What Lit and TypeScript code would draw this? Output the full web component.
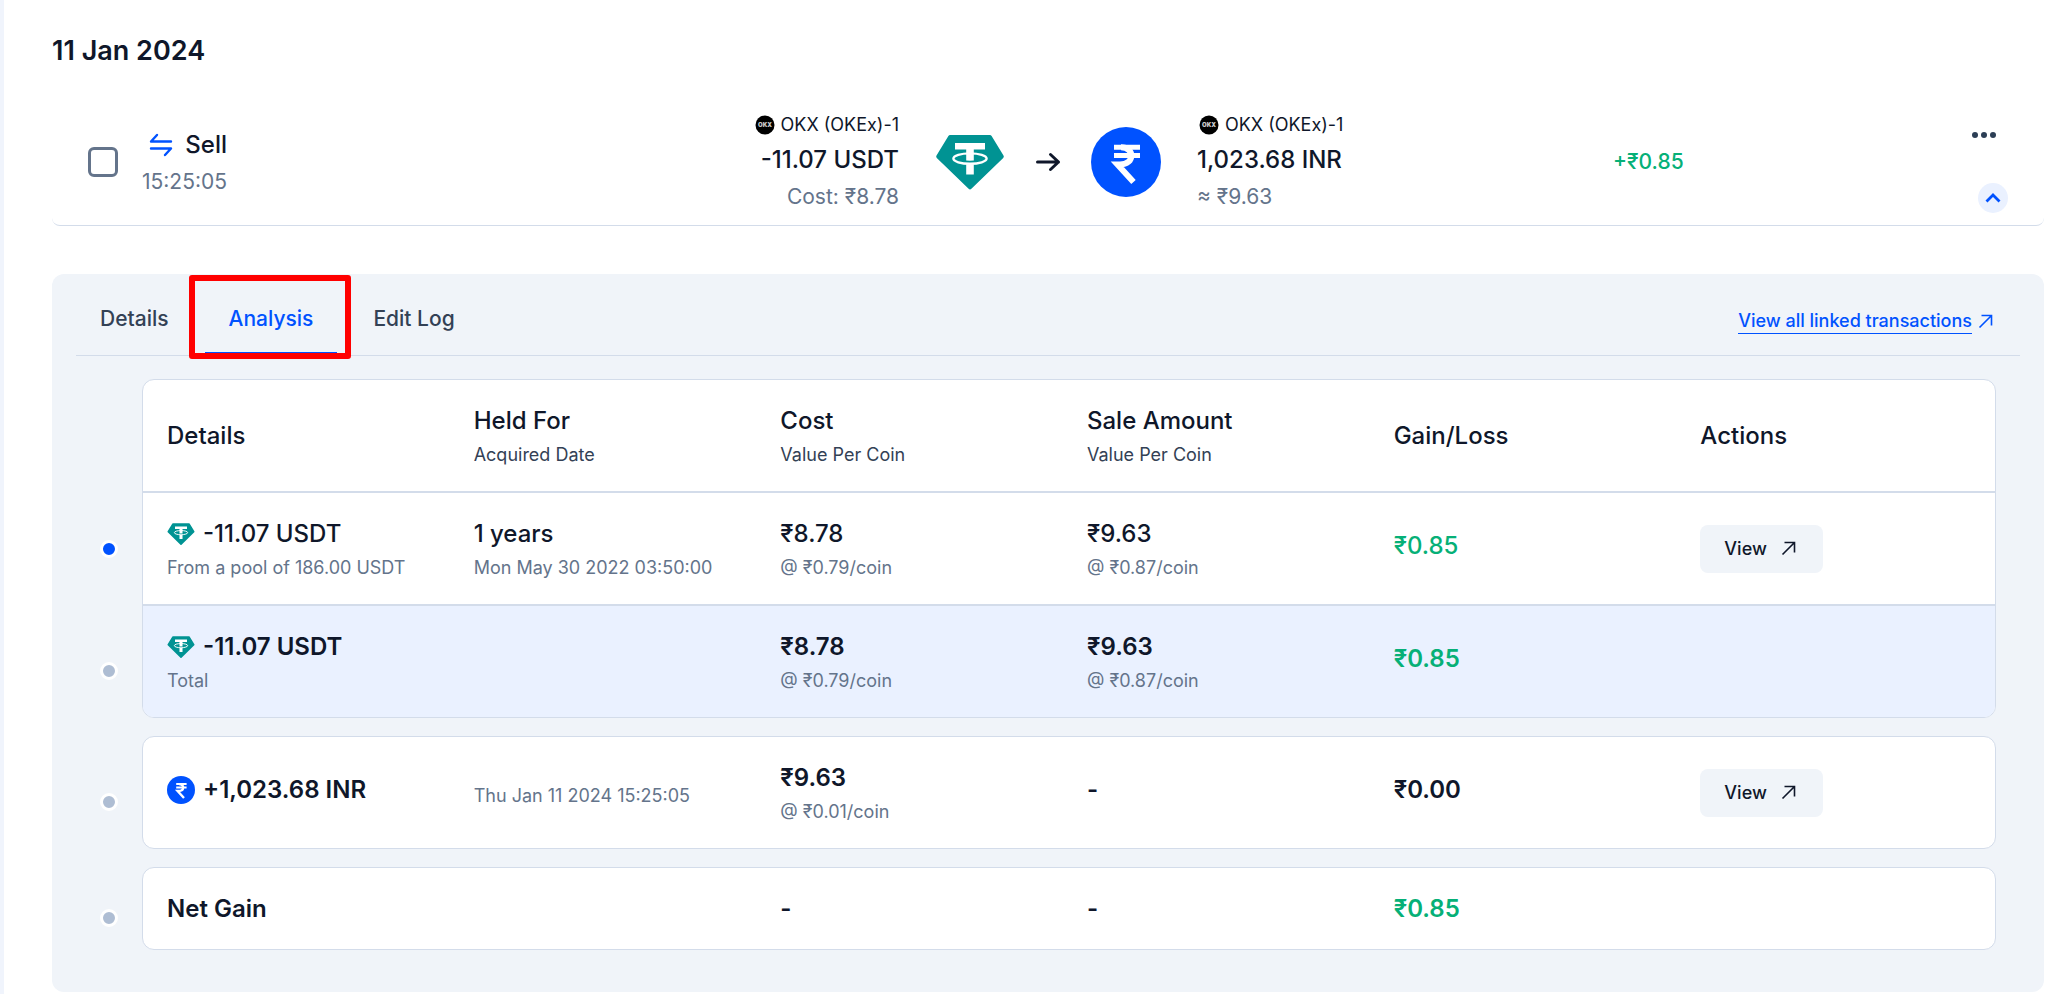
import { LitElement, html, svg, css, nothing } from "lit";
import { customElement, property, state } from "lit/decorators.js";
import { classMap } from "lit/directives/class-map.js";

type Coin = "usdt" | "inr";

interface Cell {
  main?: string;
  sub?: string;
  coin?: Coin;
  gain?: boolean;
  action?: string;
}

interface Row {
  cells: Cell[];
  kind?: "head" | "total" | "net";
}

const HEAD: Row = {
  kind: "head",
  cells: [
    { main: "Details" },
    { main: "Held For", sub: "Acquired Date" },
    { main: "Cost", sub: "Value Per Coin" },
    { main: "Sale Amount", sub: "Value Per Coin" },
    { main: "Gain/Loss" },
    { main: "Actions" },
  ],
};

const SOLD: Row[] = [
  {
    cells: [
      { coin: "usdt", main: "-11.07 USDT", sub: "From a pool of 186.00 USDT" },
      { main: "1 years", sub: "Mon May 30 2022 03:50:00" },
      { main: "₹8.78", sub: "@ ₹0.79/coin" },
      { main: "₹9.63", sub: "@ ₹0.87/coin" },
      { main: "₹0.85", gain: true },
      { action: "View" },
    ],
  },
  {
    kind: "total",
    cells: [
      { coin: "usdt", main: "-11.07 USDT", sub: "Total" },
      {},
      { main: "₹8.78", sub: "@ ₹0.79/coin" },
      { main: "₹9.63", sub: "@ ₹0.87/coin" },
      { main: "₹0.85", gain: true },
      {},
    ],
  },
];

const RECEIVED: Row[] = [
  {
    kind: "total",
    cells: [
      { coin: "inr", main: "+1,023.68 INR" },
      { sub: "Thu Jan 11 2024 15:25:05" },
      { main: "₹9.63", sub: "@ ₹0.01/coin" },
      { main: "-" },
      { main: "₹0.00" },
      { action: "View" },
    ],
  },
];

const NET: Row[] = [
  {
    kind: "net",
    cells: [{ main: "Net Gain" }, {}, { main: "-" }, { main: "-" }, { main: "₹0.85", gain: true }, {}],
  },
];

@customElement("coin-icon")
export class CoinIcon extends LitElement {
  @property() coin: Coin = "usdt";

  static styles = css`
    :host {
      display: inline-flex;
      flex: none;
      align-items: center;
      justify-content: center;
      width: 28px;
      height: 28px;
    }
    :host([large]) {
      width: 70px;
      height: 70px;
    }
    svg {
      width: 100%;
      height: 100%;
    }
  `;

  render() {
    const art =
      this.coin === "usdt"
        ? svg`
          <g transform="translate(0 1)">
            <path fill="#009393" d="M15.2 7h39.6a2 2 0 0 1 1.8 1L68.5 27.4a2 2 0 0 1-.3 2.5L36.4 60.8a2 2 0 0 1-2.8 0L1.8 29.9a2 2 0 0 1-.3-2.500L13.400 8a2 2 0 0 1 1.800-1z" />
            <path fill="#fff" d="M20 15h30v6.500H38.800v4.300h-7.600v-4.300H20z M31.200 36.200h7.600V46.500h-7.600z" />
            <ellipse cx="35" cy="30.600" rx="16.600" ry="5.200" fill="none" stroke="#fff" stroke-width="2.400" />
            <path fill="#fff" d="M31.200 25h7.600v7.600q-3.800.3-7.600 0z" />
          </g>`
        : svg`
          <circle cx="35" cy="35" r="35" fill="#0052ff" />
          <g fill="none" stroke="#fff">
            <path d="M23 20.300h26 M23 28.500h26" stroke-width="5" />
            <path d="M30 20.300c14 0 14 17.200-1 17.200h-2.500L42.500 55" stroke-width="6" />
          </g>`;
    return html`<svg viewBox="0 0 70 70" aria-hidden="true">${art}</svg>`;
  }
}

const okxLogo = html`
  <svg class="okx" viewBox="0 0 24 24" aria-hidden="true">
    <circle cx="12" cy="12" r="9.500" fill="#000" />
    <text x="12" y="14.200" text-anchor="middle" font-family="Inter, sans-serif" font-size="6" font-weight="900" fill="#ccc">OKX</text>
  </svg>
`;

const diagonalArrow = html`
  <svg class="diagonal" viewBox="0 0 20 20" aria-hidden="true">
    <path d="M3.500 15.500 15.500 3.500 M5.500 3.500h10v10" fill="none" stroke="currentColor" stroke-width="1.600" />
  </svg>
`;

@customElement("analysis-table")
export class AnalysisTable extends LitElement {
  @property({ attribute: false }) head?: Row;
  @property({ attribute: false }) rows: Row[] = [];
  @property() label = "";

  static styles = css`
    :host {
      display: block;
      overflow: hidden;
      border: 1px solid #d3dcea;
      border-radius: 12px;
      background: #fff;
    }
    table,
    thead,
    tbody {
      display: block;
    }
    tr {
      display: grid;
      grid-template-columns: repeat(6, minmax(0, 1fr));
      column-gap: 36px;
      align-items: center;
      padding: 23px 24px 22px;
    }
    .head,
    .line {
      border-bottom: 2px solid #d3dcea;
    }
    .tinted {
      background: #eaf1ff;
    }
    th,
    td {
      display: flex;
      flex-direction: column;
      align-items: flex-start;
      gap: 3px;
      padding: 0;
      text-align: left;
      white-space: nowrap;
      font-weight: 500;
    }
    .main {
      display: flex;
      align-items: center;
      gap: 8px;
      font-size: 24px;
      line-height: 36px;
      color: #0f172a;
    }
    .strong .main {
      font-weight: 600;
    }
    .sub {
      padding-bottom: 2px;
      font-size: 18px;
      line-height: 25px;
      font-weight: 400;
      color: #64748b;
    }
    .head .sub {
      color: #334155;
    }
    .lone-main {
      padding-bottom: 6px;
    }
    .lone-sub {
      padding-top: 6px;
    }
    .gain .main {
      color: #06b077;
    }
    .view {
      display: flex;
      align-items: center;
      gap: 12px;
      height: 48px;
      padding: 0 24px;
      border: 0;
      border-radius: 8px;
      background: #f0f4f9;
      font: 500 18px/24px Inter, sans-serif;
      color: #0f172a;
      cursor: pointer;
    }
    .diagonal {
      width: 20px;
      height: 20px;
    }
  `;

  private renderCell(cell: Cell, row: Row) {
    const single = row.kind !== "head" && row.kind !== "net";
    const classes = classMap({
      gain: !!cell.gain,
      "lone-main": single && !!cell.main && !cell.sub,
      "lone-sub": single && !cell.main && !!cell.sub,
    });
    const body = html`
      ${cell.main
        ? html`<span class="main">${cell.coin ? html`<coin-icon .coin=${cell.coin}></coin-icon>` : nothing}<span>${cell.main}</span></span>`
        : nothing}
      ${cell.sub ? html`<span class="sub">${cell.sub}</span>` : nothing}
      ${cell.action ? html`<button class="view" type="button">${cell.action}${diagonalArrow}</button>` : nothing}
    `;
    return row.kind === "head"
      ? html`<th scope="col" class=${classes}>${body}</th>`
      : html`<td class=${classes}>${body}</td>`;
  }

  private renderRow(row: Row, index: number) {
    const classes = classMap({
      head: row.kind === "head",
      strong: row.kind === "total" || row.kind === "net",
      tinted: row.kind === "total" && index > 0,
      line: row.kind !== "head" && index < this.rows.length - 1,
    });
    return html`<tr class=${classes}>${row.cells.map((cell) => this.renderCell(cell, row))}</tr>`;
  }

  render() {
    return html`
      <table aria-label=${this.label}>
        ${this.head ? html`<thead>${this.renderRow(this.head, 0)}</thead>` : nothing}
        <tbody>${this.rows.map((row, i) => this.renderRow(row, i))}</tbody>
      </table>
    `;
  }
}

@customElement("app-root")
export class AppRoot extends LitElement {
  @state() private tab = "Analysis";

  static styles = css`
    :host {
      display: block;
      box-sizing: border-box;
      min-height: 100vh;
      padding: 33px 12px 0 48px;
      border-left: 4px solid #f0f4fc;
      background: #fff;
      font-family: Inter, sans-serif;
      color: #0f172a;
    }
    button {
      border: 0;
      background: none;
      font-family: inherit;
      cursor: pointer;
    }
    .date {
      margin: 0 0 29px;
      font-size: 27px;
      line-height: 36px;
      font-weight: 600;
    }
    .transaction {
      display: grid;
      grid-template-columns: minmax(0, 1fr) auto minmax(0, 1fr);
      column-gap: 36px;
      align-items: center;
      padding: 12px 36px 11px;
      border-bottom: 1px solid #d3dcea;
      border-radius: 8px;
    }
    .outgoing {
      display: flex;
      align-items: center;
      gap: 24px;
    }
    .check {
      appearance: none;
      box-sizing: border-box;
      width: 30px;
      height: 30px;
      margin: 0;
      border: 3px solid #64748b;
      border-radius: 6px;
      background: #fff;
    }
    .check:checked {
      background: #0052ff;
    }
    .kind {
      display: flex;
      flex-direction: column;
      align-items: flex-end;
    }
    .title {
      display: flex;
      align-items: center;
      gap: 12px;
    }
    .swap {
      width: 24px;
      height: 24px;
    }
    .side {
      display: flex;
      flex-direction: column;
      white-space: nowrap;
    }
    .side.end {
      align-items: flex-end;
      margin-left: auto;
    }
    .wallet {
      display: flex;
      align-items: center;
      gap: 4px;
      font-size: 18px;
      line-height: 30px;
    }
    .okx {
      width: 24px;
      height: 24px;
    }
    .amount {
      font-size: 24px;
      line-height: 40px;
      font-weight: 500;
    }
    .note {
      font-size: 21px;
      line-height: 34px;
      color: #64748b;
    }
    .exchange {
      display: flex;
      align-items: center;
      gap: 25px;
    }
    .arrow {
      width: 36px;
      height: 36px;
    }
    .incoming {
      display: grid;
      grid-template-columns: minmax(0, 1fr) auto 40%;
      align-items: center;
    }
    .profit {
      font-size: 21px;
      line-height: 34px;
      font-weight: 500;
      color: #06b077;
    }
    .controls {
      display: flex;
      flex-direction: column;
      align-items: flex-end;
      justify-content: space-between;
      align-self: stretch;
      padding: 1px 0;
    }
    .menu {
      display: grid;
      place-items: center;
      width: 48px;
      height: 48px;
      padding: 0;
    }
    .dots {
      width: 24px;
      height: 24px;
    }
    .collapse {
      display: grid;
      place-items: center;
      width: 30px;
      height: 30px;
      padding: 0;
      border-radius: 50%;
      background: #eaf1ff;
    }
    .chevron {
      width: 18px;
      height: 18px;
    }
    .panel {
      margin-top: 48px;
      padding: 0 24px 42px;
      border-radius: 12px;
      background: #f0f4f9;
    }
    .bar {
      display: flex;
      align-items: flex-end;
      justify-content: space-between;
      padding: 10px 24px 0 0;
      border-bottom: 1px solid #d3dcea;
    }
    .tabs {
      display: flex;
      gap: 12px;
    }
    .tab {
      position: relative;
      padding: 21px 24px 19px;
      border-bottom: 3px solid transparent;
      font-size: 21px;
      line-height: 28px;
      font-weight: 500;
      color: #334155;
    }
    .tab.active {
      border-bottom-color: #0052ff;
      color: #0052ff;
    }
    .tab.active::after {
      content: "";
      position: absolute;
      inset: -9px -14px -7px -16px;
      border: 6px solid #f00;
      border-radius: 3px;
      pointer-events: none;
    }
    .linked {
      display: flex;
      align-items: center;
      gap: 4px;
      margin-bottom: 21px;
      font-size: 18px;
      line-height: 24px;
      font-weight: 500;
      color: #0052ff;
      text-decoration: none;
    }
    .underlined {
      border-bottom: 1px solid #0052ff;
    }
    .diagonal {
      width: 20px;
      height: 20px;
    }
    .timeline {
      display: grid;
      grid-template-columns: auto minmax(0, 1fr);
      column-gap: 24px;
      row-gap: 18px;
      padding: 23px 24px 0;
    }
    .rail {
      display: grid;
      align-items: center;
    }
    .rail.three {
      grid-template-rows: repeat(3, 1fr);
    }
    .dot {
      box-sizing: border-box;
      width: 18px;
      height: 18px;
      margin-top: 19px;
      border: 3px solid #fff;
      border-radius: 50%;
      background: #aebdd3;
    }
    .dot.current {
      grid-row: 2;
      margin-top: 0;
      background: #0052ff;
    }
    .dot.closing {
      grid-row: 3;
    }
  `;

  render() {
    return html`
      <h1 class="date">11 Jan 2024</h1>

      <section class="transaction" aria-label="Sell transaction">
        <div class="outgoing">
          <input class="check" type="checkbox" aria-label="Select transaction" />
          <div class="kind">
            <div class="title">
              <svg class="swap" viewBox="0 0 24 24" aria-hidden="true">
                <path
                  d="M22 8.500H2L8 2 M2 15.500h20L16 22"
                  fill="none"
                  stroke="#0052ff"
                  stroke-width="2.400"
                  stroke-linecap="round"
                  stroke-linejoin="round"
                />
              </svg>
              <span class="amount">Sell</span>
            </div>
            <span class="note">15:25:05</span>
          </div>
          <div class="side end">
            <span class="wallet">${okxLogo}OKX (OKEx)-1</span>
            <span class="amount">-11.07 USDT</span>
            <span class="note">Cost: ₹8.78</span>
          </div>
        </div>

        <div class="exchange">
          <coin-icon large .coin=${"usdt"}></coin-icon>
          <svg class="arrow" viewBox="0 0 36 36" aria-hidden="true">
            <path
              d="M7.500 18h21 M20.500 10.500 28.500 18l-8 7.500"
              fill="none"
              stroke="#0f172a"
              stroke-width="3"
              stroke-linecap="round"
              stroke-linejoin="round"
            />
          </svg>
          <coin-icon large .coin=${"inr"}></coin-icon>
        </div>

        <div class="incoming">
          <div class="side">
            <span class="wallet">${okxLogo}OKX (OKEx)-1</span>
            <span class="amount">1,023.68 INR</span>
            <span class="note">≈ ₹9.63</span>
          </div>
          <span class="profit">+₹0.85</span>
          <div class="controls">
            <button class="menu" type="button" aria-label="More options">
              <svg class="dots" viewBox="0 0 24 24" fill="#2c3e55" aria-hidden="true">
                <circle cx="3" cy="12" r="3" />
                <circle cx="12" cy="12" r="3" />
                <circle cx="21" cy="12" r="3" />
              </svg>
            </button>
            <button class="collapse" type="button" aria-label="Collapse">
              <svg class="chevron" viewBox="0 0 18 18" aria-hidden="true">
                <path d="M2.500 12.500 9 6l6.500 6.500" fill="none" stroke="#0052ff" stroke-width="2.800" />
              </svg>
            </button>
          </div>
        </div>
      </section>

      <section class="panel">
        <div class="bar">
          <div class="tabs" role="tablist">
            ${["Details", "Analysis", "Edit Log"].map(
              (name) => html`
                <button
                  type="button"
                  role="tab"
                  aria-selected=${this.tab === name}
                  class=${classMap({ tab: true, active: this.tab === name })}
                  @click=${() => (this.tab = name)}
                >${name}</button>
              `
            )}
          </div>
          <a class="linked" href="#linked"><span class="underlined">View all linked transactions</span>${diagonalArrow}</a>
        </div>

        <div class="timeline">
          <div class="rail three"><span class="dot current"></span><span class="dot closing"></span></div>
          <analysis-table label="Sold" .head=${HEAD} .rows=${SOLD}></analysis-table>
          <div class="rail"><span class="dot"></span></div>
          <analysis-table label="Received" .rows=${RECEIVED}></analysis-table>
          <div class="rail"><span class="dot"></span></div>
          <analysis-table label="Net gain" .rows=${NET}></analysis-table>
        </div>
      </section>
    `;
  }
}
